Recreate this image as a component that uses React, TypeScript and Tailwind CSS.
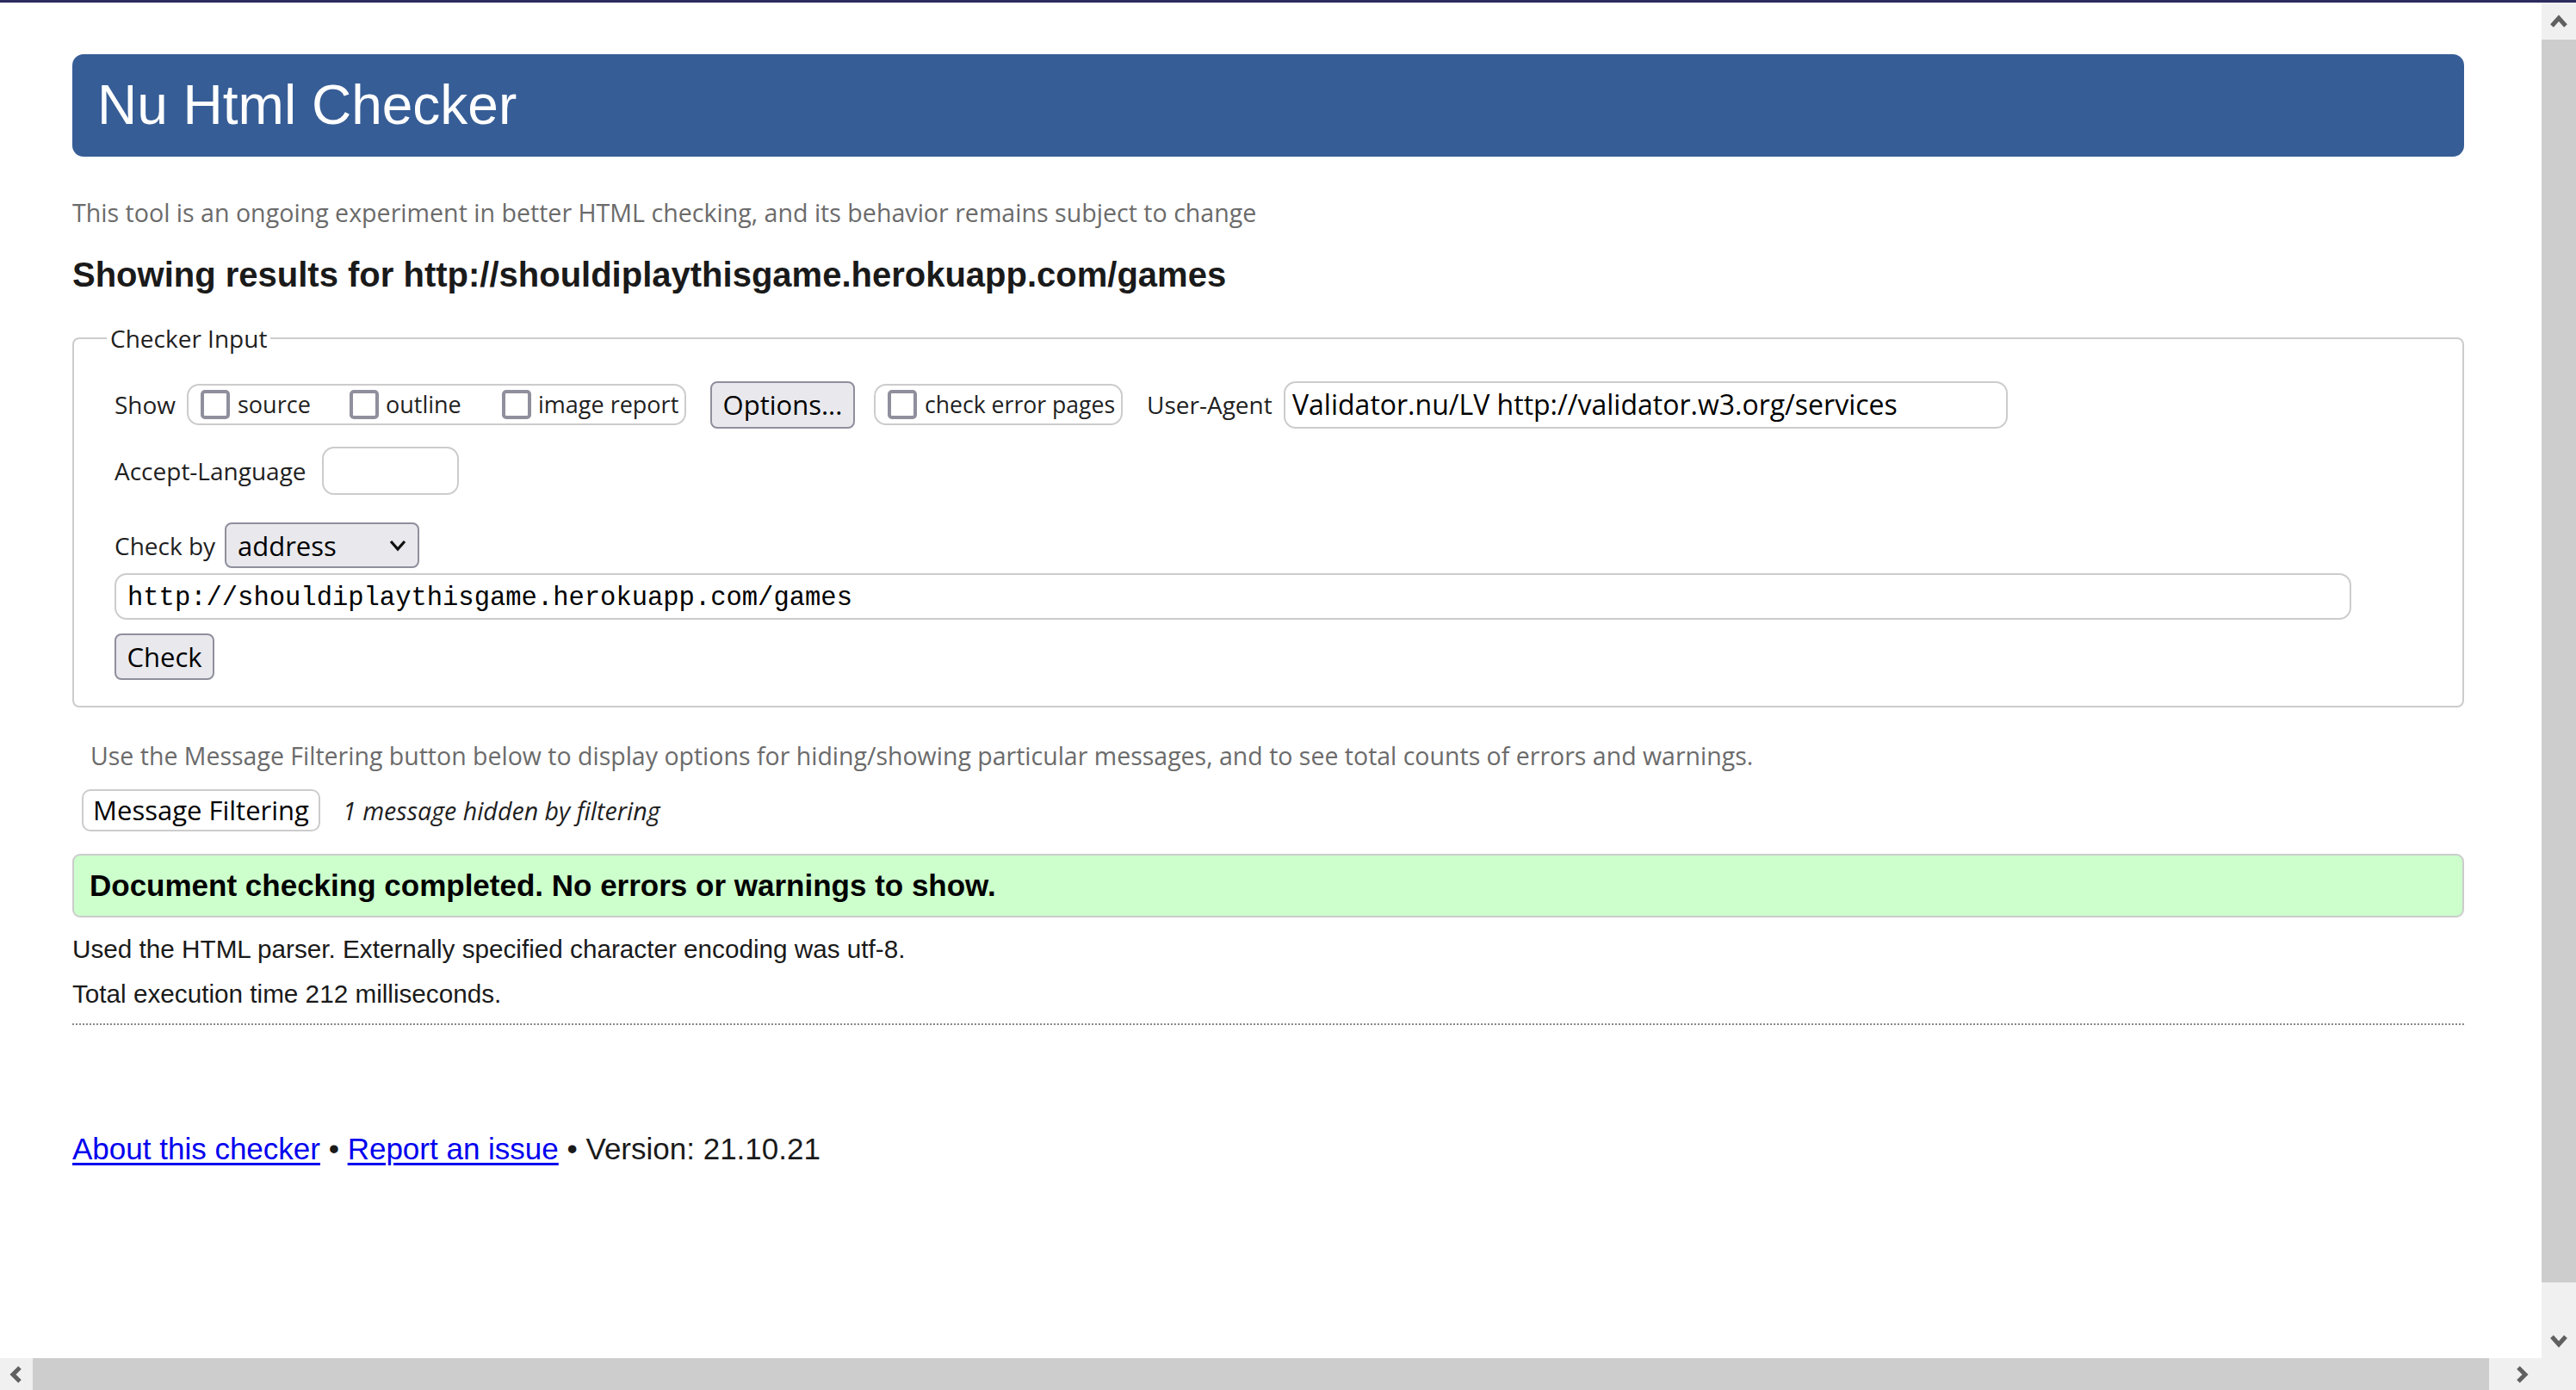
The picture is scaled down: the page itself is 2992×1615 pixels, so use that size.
import React from 'react';

const Box = ({ className = '' }: { className?: string }) => (
  <span className={`inline-block w-[34px] h-[34px] shrink-0 border-[4px] border-[#8f8f9d] rounded-[5px] bg-white ${className}`} />
);

const Chevron = ({ points, className = '' }: { points: string; className?: string }) => (
  <svg className={className} viewBox="0 0 20 20" fill="none">
    <polyline points={points} stroke="#606060" strokeWidth="5" strokeLinejoin="miter" />
  </svg>
);

const CheckerInput: React.FC = () => (
  <fieldset className="mt-[32px] border-2 border-[#ccc] rounded-[8px] pl-[47px] pr-[20px] pt-[30px] pb-[30px] font-['Open_Sans',sans-serif] text-[28px] leading-[38px] text-[#1f1f1f] whitespace-nowrap">
    <legend className="ml-[-9px] px-[4px]">Checker Input</legend>

    {/* show / options / user agent */}
    <div className="flex items-center h-[56px]">
      <span className="w-[74px]">Show</span>
      <div className="ml-[10px] w-[580px] h-[48px] flex items-center border-2 border-[#ccc] rounded-[14px] pl-[14px] text-[27px]">
        <Box />
        <span className="ml-[9px] w-[79px]">source</span>
        <Box className="ml-[51px]" />
        <span className="ml-[8px] w-[85px]">outline</span>
        <Box className="ml-[50px]" />
        <span className="ml-[8px]">image report</span>
      </div>
      <button className="ml-[28px] w-[168px] h-[55px] flex items-center justify-center bg-[#e9e9ed] border-2 border-[#8f8f9d] rounded-[8px] text-[31px] leading-[42px] text-black">
        Options...
      </button>
      <div className="ml-[22px] w-[289px] h-[48px] flex items-center border-2 border-[#ccc] rounded-[14px] pl-[14px]">
        <Box />
        <span className="ml-[9px] text-[26.6px]">check error pages</span>
      </div>
      <span className="ml-[28px] w-[150px]">User-Agent</span>
      <div className="ml-[9px] w-[841px] h-[55px] flex items-center border-2 border-[#ccc] rounded-[14px] pl-[8px] text-[32px] leading-[42px] text-black">
        Validator.nu/LV http://validator.w3.org/services
      </div>
    </div>

    <div className="mt-[21px] flex items-center h-[56px]">
      <span className="w-[231px]">Accept-Language</span>
      <div className="ml-[10px] w-[159px] h-[56px] border-2 border-[#ccc] rounded-[14px]" />
    </div>

    <div className="mt-[32px] flex items-center h-[53px]">
      <span className="w-[119px]">Check by</span>
      <div className="ml-[9px] w-[226px] h-[53px] flex items-center bg-[#e9e9ed] border-2 border-[#8f8f9d] rounded-[8px] pl-[13px] pr-[13px] text-black">
        <span className="flex-1 text-[31px] leading-[42px]">address</span>
        <svg className="w-[20px] h-[14px]" viewBox="0 0 20 14" fill="none">
          <polyline points="2,2 10,11 18,2" stroke="#111" strokeWidth="3.2" />
        </svg>
      </div>
    </div>

    <div className="mt-[6px] w-[2598px] h-[54px] flex items-center border-2 border-[#ccc] rounded-[14px] pl-[13px] pt-[4px] font-['Liberation_Mono',monospace] text-[30.5px] leading-[40px] text-black">
      http://shouldiplaythisgame.herokuapp.com/games
    </div>

    <button className="mt-[16px] w-[116px] h-[54px] flex items-center justify-center bg-[#e9e9ed] border-2 border-[#8f8f9d] rounded-[8px] text-[31px] leading-[42px] text-black">
      Check
    </button>
  </fieldset>
);

export default function App() {
  return (
    <div className="w-[2992px] h-[1615px] flex flex-col overflow-hidden bg-white">
      <div className="h-[3px] shrink-0 bg-[#2e2b5f]" />

      <div className="flex flex-1 min-h-0">
        <main className="flex-1 flex flex-col pl-[84px] pr-[90px]">
          <header className="mt-[60px] h-[119px] flex items-center rounded-[13px] bg-[#365d96] pl-[29px]">
            <h1 className="font-['Liberation_Sans',Arial,sans-serif] text-[64px] leading-[119px] text-white">Nu Html Checker</h1>
          </header>

          <p className="mt-[46px] font-['Open_Sans',sans-serif] text-[28.6px] leading-[38px] text-[#6b6b6b]">
            This tool is an ongoing experiment in better HTML checking, and its behavior remains subject to change
          </p>

          <h2 className="mt-[31px] font-['Liberation_Sans',Arial,sans-serif] font-bold text-[40px] leading-[45px] text-[#1a1a1a]">
            Showing results for http://shouldiplaythisgame.herokuapp.com/games
          </h2>

          <CheckerInput />

          <p className="mt-[37px] ml-[21px] font-['Open_Sans',sans-serif] text-[28.5px] leading-[38px] text-[#6b6b6b]">
            Use the Message Filtering button below to display options for hiding/showing particular messages, and to see total counts of errors and warnings.
          </p>

          <div className="mt-[20px] ml-[11px] flex items-baseline font-['Open_Sans',sans-serif]">
            <button className="w-[277px] h-[49px] bg-white border-2 border-[#ccc] rounded-[10px] text-[31px] leading-[45px] text-black">
              Message Filtering
            </button>
            <span className="ml-[26px] italic text-[28.6px] leading-[38px] text-[#1f1f1f]">1 message hidden by filtering</span>
          </div>

          <div className="mt-[26px] h-[74px] flex items-center bg-[#ccffcc] border-2 border-[#ccc] rounded-[9px] pl-[18px] font-['Liberation_Sans',Arial,sans-serif] font-bold text-[35px] leading-[70px] text-black">
            Document checking completed. No errors or warnings to show.
          </div>

          <div className="mt-[11px] font-['Liberation_Sans',Arial,sans-serif] text-[29.7px] leading-[52px] text-[#1a1a1a]">
            <p>Used the HTML parser. Externally specified character encoding was utf-8.</p>
            <p>Total execution time 212 milliseconds.</p>
          </div>

          <div className="mt-[8px] border-b-2 border-dotted border-[#888]" />

          <footer className="mt-[124px] font-['Liberation_Sans',Arial,sans-serif] text-[35px] leading-[40px] text-[#1a1a1a]">
            <a href="#" className="text-[#0000ee] underline decoration-[3px] underline-offset-[4px]">About this checker</a>
            {' • '}
            <a href="#" className="text-[#0000ee] underline decoration-[3px] underline-offset-[4px]">Report an issue</a>
            {' • Version: 21.10.21'}
          </footer>
        </main>

        {/* vertical scrollbar */}
        <div className="w-[40px] shrink-0 flex flex-col bg-[#f0f0f0]">
          <div className="h-[43px] flex items-center justify-center">
            <Chevron points="2,15 10,6 18,15" className="w-[20px] h-[20px]" />
          </div>
          <div className="h-[1444px] bg-[#cdcdcd]" />
          <div className="flex-1 flex items-end justify-center pb-[10px]">
            <Chevron points="2,5 10,14 18,5" className="w-[20px] h-[20px]" />
          </div>
        </div>
      </div>

      {/* horizontal scrollbar */}
      <div className="h-[37px] shrink-0 flex bg-[#f0f0f0]">
        <div className="w-[38px] flex items-center justify-center">
          <Chevron points="14,2 6,10 14,18" className="w-[20px] h-[20px]" />
        </div>
        <div className="w-[2853px] bg-[#cdcdcd]" />
        <div className="flex-1 flex items-center pl-[28px]">
          <Chevron points="6,2 14,10 6,18" className="w-[20px] h-[20px]" />
        </div>
      </div>
    </div>
  );
}
